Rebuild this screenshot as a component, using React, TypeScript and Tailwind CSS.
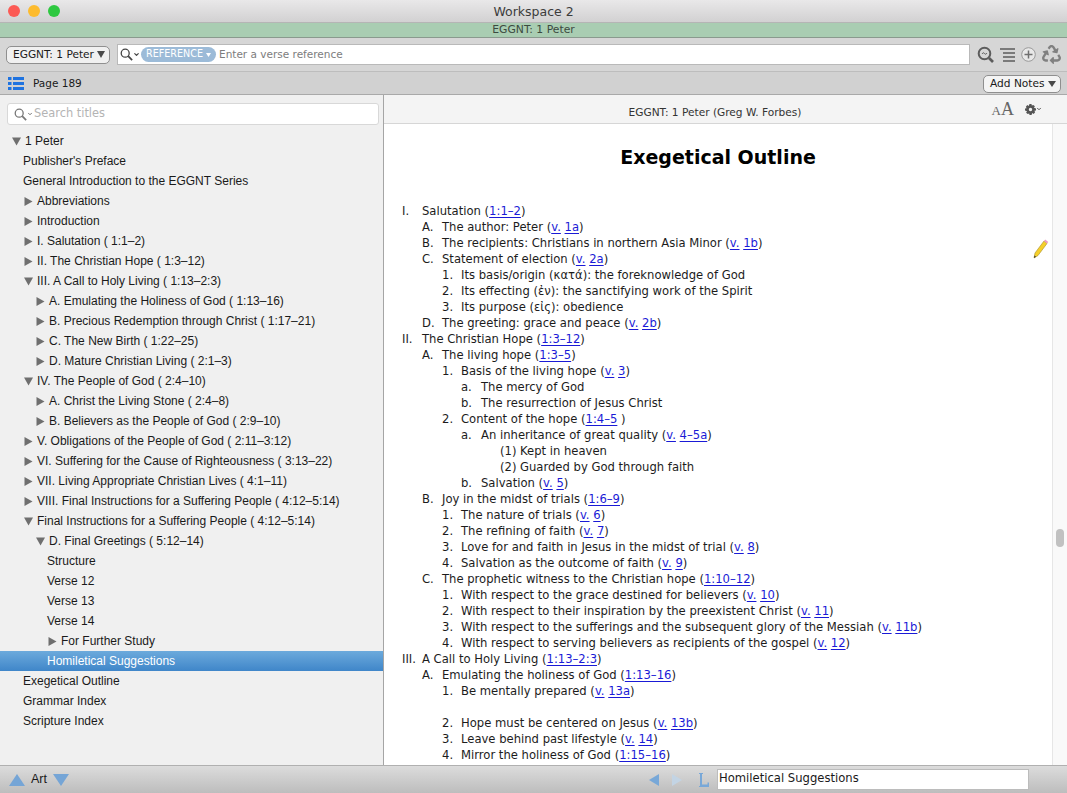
import React from 'react';
import { ChevronDown } from 'lucide-react';
import { FaRecycle } from 'react-icons/fa';

type Node = { label: string; indent: number; arrow?: 'right' | 'down'; selected?: boolean };

// indent = left edge of the label text, arrow sits 13px before it
const titles: Node[] = [
  { label: '1 Peter', indent: 25, arrow: 'down' },
  { label: "Publisher's Preface", indent: 23 },
  { label: 'General Introduction to the EGGNT Series', indent: 23 },
  { label: 'Abbreviations', indent: 37, arrow: 'right' },
  { label: 'Introduction', indent: 37, arrow: 'right' },
  { label: 'I. Salutation ( 1:1–2)', indent: 37, arrow: 'right' },
  { label: 'II. The Christian Hope ( 1:3–12)', indent: 37, arrow: 'right' },
  { label: 'III. A Call to Holy Living ( 1:13–2:3)', indent: 37, arrow: 'down' },
  { label: 'A. Emulating the Holiness of God ( 1:13–16)', indent: 49, arrow: 'right' },
  { label: 'B. Precious Redemption through Christ ( 1:17–21)', indent: 49, arrow: 'right' },
  { label: 'C. The New Birth ( 1:22–25)', indent: 49, arrow: 'right' },
  { label: 'D. Mature Christian Living ( 2:1–3)', indent: 49, arrow: 'right' },
  { label: 'IV. The People of God ( 2:4–10)', indent: 37, arrow: 'down' },
  { label: 'A. Christ the Living Stone ( 2:4–8)', indent: 49, arrow: 'right' },
  { label: 'B. Believers as the People of God ( 2:9–10)', indent: 49, arrow: 'right' },
  { label: 'V. Obligations of the People of God ( 2:11–3:12)', indent: 37, arrow: 'right' },
  { label: 'VI. Suffering for the Cause of Righteousness ( 3:13–22)', indent: 37, arrow: 'right' },
  { label: 'VII. Living Appropriate Christian Lives ( 4:1–11)', indent: 37, arrow: 'right' },
  { label: 'VIII. Final Instructions for a Suffering People ( 4:12–5:14)', indent: 37, arrow: 'right' },
  { label: 'Final Instructions for a Suffering People ( 4:12–5:14)', indent: 37, arrow: 'down' },
  { label: 'D. Final Greetings ( 5:12–14)', indent: 49, arrow: 'down' },
  { label: 'Structure', indent: 47 },
  { label: 'Verse 12', indent: 47 },
  { label: 'Verse 13', indent: 47 },
  { label: 'Verse 14', indent: 47 },
  { label: 'For Further Study', indent: 61, arrow: 'right' },
  { label: 'Homiletical Suggestions', indent: 47, selected: true },
  { label: 'Exegetical Outline', indent: 23 },
  { label: 'Grammar Index', indent: 23 },
  { label: 'Scripture Index', indent: 23 },
];

// [level, marker, text]; text between | bars is a link
const outline: [number, string, string][] = [
  [0, 'I.', 'Salutation (|1:1–2|)'],
  [1, 'A.', 'The author: Peter (|v. 1a|)'],
  [1, 'B.', 'The recipients: Christians in northern Asia Minor (|v. 1b|)'],
  [1, 'C.', 'Statement of election (|v. 2a|)'],
  [2, '1.', 'Its basis/origin (κατά): the foreknowledge of God'],
  [2, '2.', 'Its effecting (ἐν): the sanctifying work of the Spirit'],
  [2, '3.', 'Its purpose (εἰς): obedience'],
  [1, 'D.', 'The greeting: grace and peace (|v. 2b|)'],
  [0, 'II.', 'The Christian Hope (|1:3–12|)'],
  [1, 'A.', 'The living hope (|1:3–5|)'],
  [2, '1.', 'Basis of the living hope (|v. 3|)'],
  [3, 'a.', 'The mercy of God'],
  [3, 'b.', 'The resurrection of Jesus Christ'],
  [2, '2.', 'Content of the hope (|1:4–5| )'],
  [3, 'a.', 'An inheritance of great quality (|v. 4–5a|)'],
  [4, '(1)', 'Kept in heaven'],
  [4, '(2)', 'Guarded by God through faith'],
  [3, 'b.', 'Salvation (|v. 5|)'],
  [1, 'B.', 'Joy in the midst of trials (|1:6–9|)'],
  [2, '1.', 'The nature of trials (|v. 6|)'],
  [2, '2.', 'The refining of faith (|v. 7|)'],
  [2, '3.', 'Love for and faith in Jesus in the midst of trial (|v. 8|)'],
  [2, '4.', 'Salvation as the outcome of faith (|v. 9|)'],
  [1, 'C.', 'The prophetic witness to the Christian hope (|1:10–12|)'],
  [2, '1.', 'With respect to the grace destined for believers (|v. 10|)'],
  [2, '2.', 'With respect to their inspiration by the preexistent Christ (|v. 11|)'],
  [2, '3.', 'With respect to the sufferings and the subsequent glory of the Messiah (|v. 11b|)'],
  [2, '4.', 'With respect to serving believers as recipients of the gospel (|v. 12|)'],
  [0, 'III.', 'A Call to Holy Living (|1:13–2:3|)'],
  [1, 'A.', 'Emulating the holiness of God (|1:13–16|)'],
  [2, '1.', 'Be mentally prepared (|v. 13a|)'],
  [2, '', ''],
  [2, '2.', 'Hope must be centered on Jesus (|v. 13b|)'],
  [2, '3.', 'Leave behind past lifestyle (|v. 14|)'],
  [2, '4.', 'Mirror the holiness of God (|1:15–16|)'],
];

const levelPad = ['pl-[18px]', 'pl-[38px]', 'pl-[58px]', 'pl-[77px]', 'pl-[116px]'];
const markerWidth = ['w-[20px]', 'w-[20px]', 'w-[19px]', 'w-[20px]', 'w-[20px]'];

function Arrow({ dir, white }: { dir: 'right' | 'down'; white?: boolean }) {
  return (
    <svg width="9" height="9" viewBox="0 0 9 9" className="shrink-0">
      <path d={dir === 'right' ? 'M0.5 0 L8.5 4.5 L0.5 9 Z' : 'M0 0.5 L9 0.5 L4.5 8.5 Z'} fill={white ? '#ffffff' : '#6f6f6f'} />
    </svg>
  );
}

function SearchGlyph({ className }: { className?: string }) {
  return (
    <svg width="13" height="13" viewBox="0 0 15 15" fill="none" className={className}>
      <circle cx="6" cy="6" r="4.6" stroke="currentColor" strokeWidth="1.5" />
      <path d="M9.5 9.5 L14 14" stroke="currentColor" strokeWidth="2" />
    </svg>
  );
}

function OutlineText({ text }: { text: string }) {
  const parts = text.split('|');
  return (
    <span>
      {parts.map((part, i) =>
        i % 2 === 0 ? (
          <span key={i}>{part}</span>
        ) : (
          <span key={i}>
            {part.split(' ').map((word, j) => (
              <span key={j}>
                {j > 0 && ' '}
                <a className="text-[#1a1ad6] underline underline-offset-2">{word}</a>
              </span>
            ))}
          </span>
        ),
      )}
    </span>
  );
}

export default function App() {
  return (
    <div className="w-[1067px] h-[793px] overflow-hidden flex flex-col bg-[#d6d6d6] text-[#1a1a1a] font-['Liberation_Sans',sans-serif]">
      {/* Title bar */}
      <div className="relative h-[22px] shrink-0 flex items-center justify-center pt-[2px] bg-gradient-to-b from-[#e9e8e9] to-[#d2d1d2] text-[#3c3c3c] font-['DejaVu_Sans',sans-serif]">
        <div className="absolute left-[8px] top-[5px] flex gap-[8px]">
          <span className="w-[12px] h-[12px] rounded-full bg-[#fc5a55]" />
          <span className="w-[12px] h-[12px] rounded-full bg-[#fdbb2e]" />
          <span className="w-[12px] h-[12px] rounded-full bg-[#2ec840]" />
        </div>
        <span className="text-[12.5px]">Workspace 2</span>
      </div>

      {/* Resource tab */}
      <div className="h-[16px] shrink-0 flex items-center justify-center bg-[#a9cdb2] border-t border-[#b5b5b5] border-b border-b-[#8a9a8e] text-[10.8px] text-[#3c4a40] font-['DejaVu_Sans',sans-serif]">
        EGGNT: 1 Peter
      </div>

      {/* Toolbar */}
      <div className="h-[34px] shrink-0 flex items-center pl-[6px] pr-[6px] bg-[#d6d6d6] border-b border-[#bdbdbd] font-['DejaVu_Sans',sans-serif]">
        <button className="w-[104px] h-[18px] flex items-center justify-between pl-[6px] pr-[4px] rounded-[5px] border border-[#8f8f8f] bg-[#f0f0f0] text-[10.6px] text-[#1a1a1a] whitespace-nowrap">
          EGGNT: 1 Peter
          <svg width="8" height="7" viewBox="0 0 8 7"><path d="M0 0 H8 L4 7 Z" fill="#4a4a4a" /></svg>
        </button>
        <div className="ml-[7px] w-[853px] h-[21px] flex items-center pl-[2px] bg-white border border-[#b9b9b9]">
          <SearchGlyph className="text-[#444444]" />
          <ChevronDown size={7} strokeWidth={4} className="text-[#444444]" />
          <span className="ml-[1px] w-[75px] h-[15px] flex items-center justify-center gap-[3px] rounded-full bg-[#9cbbd8] text-[9.6px] text-white whitespace-nowrap">
            REFERENCE
            <svg width="5" height="4" viewBox="0 0 5 4"><path d="M0 0 H5 L2.5 4 Z" fill="#ffffff" /></svg>
          </span>
          <span className="ml-[3px] text-[10.5px] text-[#7d7d7d]">Enter a verse reference</span>
        </div>
        <div className="ml-[7px] flex items-center gap-[6px] text-[#5c5c5c]">
          <svg width="17" height="17" viewBox="0 0 17 17" fill="none">
            <circle cx="7.5" cy="7.5" r="5.8" stroke="#5c5c5c" strokeWidth="2" />
            <path d="M12 12 L16 16" stroke="#5c5c5c" strokeWidth="2.6" />
            <path d="M5 8 C6 6.5 7 6.5 7.5 7.5 C8 8.5 9 8.5 10 7" stroke="#5c5c5c" strokeWidth="1" />
          </svg>
          <svg width="15" height="14" viewBox="0 0 15 14">
            <path d="M0 1 H15 M3 5 H15 M3 9 H15 M3 13 H15" stroke="#5c5c5c" strokeWidth="1.6" />
          </svg>
          <svg width="15" height="15" viewBox="0 0 15 15" fill="none">
            <circle cx="7.5" cy="7.5" r="6.8" fill="#e8e8e8" stroke="#9a9a9a" />
            <path d="M7.5 3.5 V11.5 M3.5 7.5 H11.5" stroke="#707070" strokeWidth="1.5" />
          </svg>
          <FaRecycle size={19} className="text-[#808080]" />
        </div>
      </div>

      {/* Page bar */}
      <div className="h-[23px] shrink-0 flex items-center justify-between pl-[8px] pr-[6px] pt-[1px] bg-[#d1d1d1] border-b border-[#a9a9a9]">
        <div className="flex items-center gap-[8px]">
          <svg width="16" height="13" viewBox="0 0 16 13" fill="#1f73e0">
            <path d="M0 0 H3.5 V3 H0 Z M5 0 H16 V3 H5 Z M0 5 H3.5 V8 H0 Z M5 5 H16 V8 H5 Z M0 10 H3.5 V13 H0 Z M5 10 H16 V13 H5 Z" />
          </svg>
          <span className="ml-[1px] text-[10.5px] text-[#1a1a1a] font-['DejaVu_Sans',sans-serif]">Page 189</span>
        </div>
        <button className="w-[78px] h-[18px] flex items-center justify-between pl-[6px] pr-[4px] rounded-[5px] border border-[#8f8f8f] bg-[#f4f4f4] text-[10.6px] text-[#1a1a1a] whitespace-nowrap font-['DejaVu_Sans',sans-serif]">
          Add Notes
          <svg width="8" height="6" viewBox="0 0 8 6"><path d="M0 0 H8 L4 6 Z" fill="#4a4a4a" /></svg>
        </button>
      </div>

      {/* Main area */}
      <div className="flex-1 min-h-0 flex">
        {/* Sidebar */}
        <aside className="w-[384px] shrink-0 flex flex-col bg-[#f0f0f0] border-r border-[#a5a5a5]">
          <div className="pt-[8px] pl-[7px] pr-[4px]">
            <div className="h-[22px] flex items-center pl-[6px] bg-white border border-[#d8d8d8] rounded-[3px] text-[#777777]">
              <SearchGlyph />
              <ChevronDown size={6} strokeWidth={4} />
              <span className="ml-[1px] text-[11.4px] text-[#b4b4b4] font-['DejaVu_Sans',sans-serif]">Search titles</span>
            </div>
          </div>
          <div className="mt-[6px] flex flex-col">
            {titles.map((t) => (
              <div
                key={t.label}
                className={`h-[20px] relative flex items-center text-[12px] ${
                  t.selected ? 'bg-gradient-to-b from-[#6caadc] to-[#3f86c9] text-white' : 'text-[#1a1a1a]'
                }`}
              >
                <TitleRow node={t} />
              </div>
            ))}
          </div>
        </aside>

        {/* Reader */}
        <section className="relative flex-1 min-w-0 flex flex-col bg-white">
          <div className="relative h-[29px] shrink-0 flex items-center justify-center pr-[21px] pt-[7px] bg-[#f4f4f4] border-b border-[#d6d6d6] text-[10.6px] text-[#333333] font-['DejaVu_Sans',sans-serif]">
            EGGNT: 1 Peter (Greg W. Forbes)
            <div className="absolute right-[25px] top-[5px] flex items-center gap-[11px]">
              <span className="text-[#666666] font-['Liberation_Serif',serif] leading-none">
                <span className="text-[13px]">A</span>
                <span className="text-[18px]">A</span>
              </span>
              <span className="flex items-center text-[#555555]">
                <svg width="11" height="11" viewBox="0 0 11 11" fill="#555555">
                  <path fillRule="evenodd" d="M4.5 0 H6.5 L6.8 1.6 L8.3 0.9 L9.9 2.3 L9 3.7 L11 4.5 V6.5 L9.4 6.8 L10.1 8.3 L8.7 9.9 L7.3 9 L6.5 11 H4.5 L4.2 9.4 L2.7 10.1 L1.1 8.7 L2 7.3 L0 6.5 V4.5 L1.6 4.2 L0.9 2.7 L2.3 1.1 L3.7 2 Z M5.5 3.8 A1.7 1.7 0 1 0 5.5 7.2 A1.7 1.7 0 1 0 5.5 3.8 Z" />
                </svg>
                <ChevronDown size={6} strokeWidth={4} />
              </span>
            </div>
          </div>

          <div className="flex-1 min-h-0 flex">
            <div className="flex-1 min-w-0 overflow-hidden font-['DejaVu_Sans',sans-serif] text-[11.6px] text-[#1c1c1c]">
              <h1 className="mt-[18px] mb-[31px] text-center text-[19px] leading-[30px] font-bold text-black">Exegetical Outline</h1>
              {outline.map(([level, marker, text], i) => (
                <div key={i} className={`h-[16px] leading-[16px] flex whitespace-nowrap ${levelPad[level]}`}>
                  <span className={`shrink-0 ${markerWidth[level]}`}>{marker}</span>
                  <OutlineText text={text} />
                </div>
              ))}
            </div>
            <div className="w-[15px] shrink-0 relative bg-[#f9f9f9] border-l border-[#e6e6e6]">
              <div className="absolute left-[3px] top-[405px] w-[8px] h-[18px] rounded-full bg-[#c1c1c1]" />
            </div>
          </div>

          {/* Annotation marker */}
          <svg width="16" height="20" viewBox="0 0 16 20" className="absolute left-[649px] top-[144px]">
            <path d="M1 19 L2 14 L11 2 L14 4.5 L5 16.5 Z" fill="#f5cf2a" stroke="#a88f2a" strokeWidth="0.6" />
            <path d="M11 2 L12.2 0.6 L15.3 3 L14 4.5 Z" fill="#ee9cc4" />
            <path d="M1 19 L1.5 16.5 L3 17.8 Z" fill="#333333" />
          </svg>
        </section>
      </div>

      {/* Bottom bar */}
      <div className="h-[28px] shrink-0 flex items-center bg-gradient-to-b from-[#dcdcdc] to-[#bdbdbd] border-t border-[#b0b0b0]">
        <div className="w-[384px] shrink-0 flex items-center pl-[9px]">
          <svg width="16" height="12" viewBox="0 0 16 12"><path d="M8 0 L16 12 H0 Z" fill="#75a5d6" /></svg>
          <span className="ml-[6px] text-[12.5px] text-[#1a1a1a]">Art</span>
          <svg width="16" height="12" viewBox="0 0 16 12" className="ml-[6px]"><path d="M0 0 H16 L8 12 Z" fill="#75a5d6" /></svg>
        </div>
        <div className="flex items-center ml-[265px]">
          <svg width="10" height="12" viewBox="0 0 10 12"><path d="M10 0 V12 L0 6 Z" fill="#78a8d8" /></svg>
          <svg width="10" height="12" viewBox="0 0 10 12" className="ml-[13px]"><path d="M0 0 V12 L10 6 Z" fill="#c3d4e4" /></svg>
          <svg width="11" height="14" viewBox="0 0 11 14" className="ml-[16px]"><path d="M1 0 H5 V1 H4 V11.5 H9.5 V9.5 H11 V14 H1 V13 H2 V1 H1 Z" fill="#78a8d8" /></svg>
          <div className="ml-[8px] w-[312px] h-[21px] flex items-center pl-[1px] pb-[2px] bg-white border border-[#bcbcbc] text-[11.6px] text-[#1a1a1a] font-['DejaVu_Sans',sans-serif]">
            Homiletical Suggestions
          </div>
        </div>
      </div>
    </div>
  );
}

function TitleRow({ node }: { node: Node }) {
  return (
    <div className="flex items-center w-full" style={{ paddingLeft: node.arrow ? node.indent - 13 : node.indent }}>
      {node.arrow && (
        <span className="w-[13px] shrink-0 flex items-center">
          <Arrow dir={node.arrow} white={node.selected} />
        </span>
      )}
      <span className="whitespace-nowrap">{node.label}</span>
    </div>
  );
}
